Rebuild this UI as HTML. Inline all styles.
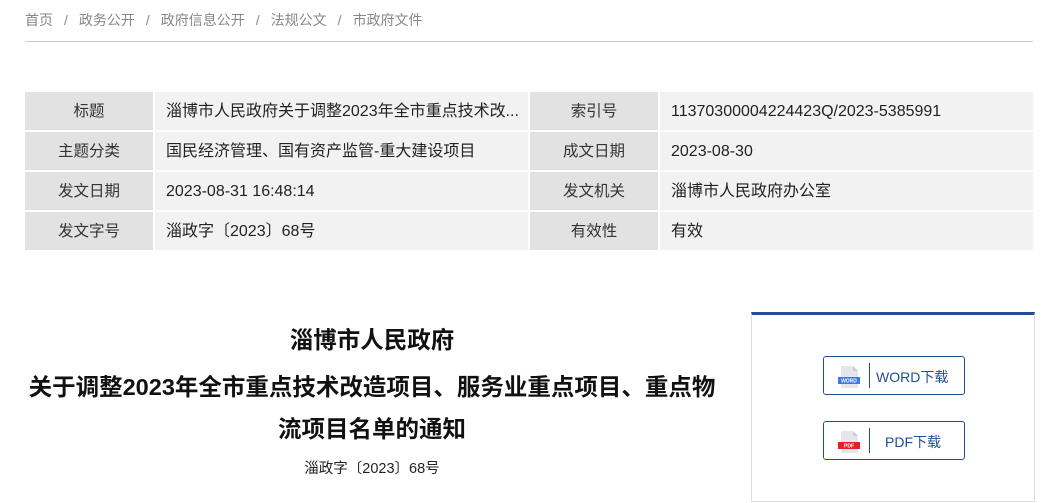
<!DOCTYPE html>
<html><head><meta charset="utf-8"><style>
*{margin:0;padding:0;box-sizing:border-box}
body{width:1057px;height:503px;background:#fff;font-family:"Liberation Sans","Noto Sans CJK SC",sans-serif;position:relative;overflow:hidden;color:#333}
.bc{position:absolute;left:25px;top:10px;font-size:14px;color:#888}
.bc span{margin:0 11px}
.hr{position:absolute;left:25px;top:41px;width:1008px;height:1px;background:#ccc}
table{position:absolute;left:25px;top:92px;border-collapse:separate;border-spacing:2px 0;margin-left:-2px}
td{height:40px;font-size:16px;color:#222;border-bottom:2px solid #fff;vertical-align:middle;line-height:20px;padding:2px 0 0 0}
td div{height:20px;line-height:20px;overflow:hidden}
td.l{background:#e2e2e2;text-align:center;width:128px;color:#333;font-size:15.5px}
td.v{background:#f2f2f2;padding-left:11px}
.title{position:absolute;left:0;width:744px;text-align:center;font-weight:bold;font-size:23.5px;color:#111;line-height:30px;white-space:nowrap}
.sub{position:absolute;left:22px;width:700px;top:457px;text-align:center;font-size:14.5px;color:#222}
.panel{position:absolute;left:751px;top:312px;width:284px;height:190px;border:1px solid #ddd;border-top:3px solid #1f4e96}
.btn{position:absolute;left:71px;width:142px;height:39px;border:1px solid #1f4e96;border-radius:3px;font-size:14px;color:#1f4e96}
.btn .sep{position:absolute;left:45px;top:6px;width:1px;height:25px;background:#1f4e96}
.btn .t{position:absolute;top:10px}
.ic{position:absolute;left:14px;top:9px}
</style></head><body>
<div class="bc">首页<span>/</span>政务公开<span>/</span>政府信息公开<span>/</span>法规公文<span>/</span>市政府文件</div>
<div class="hr"></div>
<table>
<tr><td class="l"><div>标题</div></td><td class="v" style="width:373px"><div>淄博市人民政府关于调整2023年全市重点技术改...</div></td><td class="l"><div>索引号</div></td><td class="v" style="width:373px"><div>11370300004224423Q/2023-5385991</div></td></tr>
<tr><td class="l"><div>主题分类</div></td><td class="v"><div>国民经济管理、国有资产监管-重大建设项目</div></td><td class="l"><div>成文日期</div></td><td class="v"><div>2023-08-30</div></td></tr>
<tr><td class="l"><div>发文日期</div></td><td class="v"><div>2023-08-31 16:48:14</div></td><td class="l"><div>发文机关</div></td><td class="v"><div>淄博市人民政府办公室</div></td></tr>
<tr><td class="l"><div>发文字号</div></td><td class="v"><div>淄政字〔2023〕68号</div></td><td class="l"><div>有效性</div></td><td class="v"><div>有效</div></td></tr>
</table>
<div class="title" style="top:325px">淄博市人民政府</div>
<div class="title" style="top:372px">关于调整2023年全市重点技术改造项目、服务业重点项目、重点物</div>
<div class="title" style="top:414px">流项目名单的通知</div>
<div class="sub">淄政字〔2023〕68号</div>
<div class="panel">
<div class="btn" style="top:41px"><svg class="ic" width="22" height="22" viewBox="0 0 22 22"><path d="M3 0h12l5 5v17H3z" fill="#e4e6ec"/><path d="M15 0v5h5z" fill="#c8ccd6"/><rect x="0" y="11" width="22" height="7" fill="#3b7be8"/><text x="11" y="16.5" font-size="5" fill="#fff" text-anchor="middle" font-family="Liberation Sans" font-weight="bold">WORD</text></svg><div class="sep"></div><div class="t" style="left:52px">WORD下载</div></div>
<div class="btn" style="top:106px"><svg class="ic" width="22" height="22" viewBox="0 0 22 22"><path d="M3 0h12l5 5v17H3z" fill="#e4e6ec"/><path d="M15 0v5h5z" fill="#c8ccd6"/><rect x="0" y="11" width="22" height="7" fill="#e52222"/><text x="11" y="16.5" font-size="5" fill="#fff" text-anchor="middle" font-family="Liberation Sans" font-weight="bold">PDF</text></svg><div class="sep"></div><div class="t" style="left:61px">PDF下载</div></div>
</div>
</body></html>
